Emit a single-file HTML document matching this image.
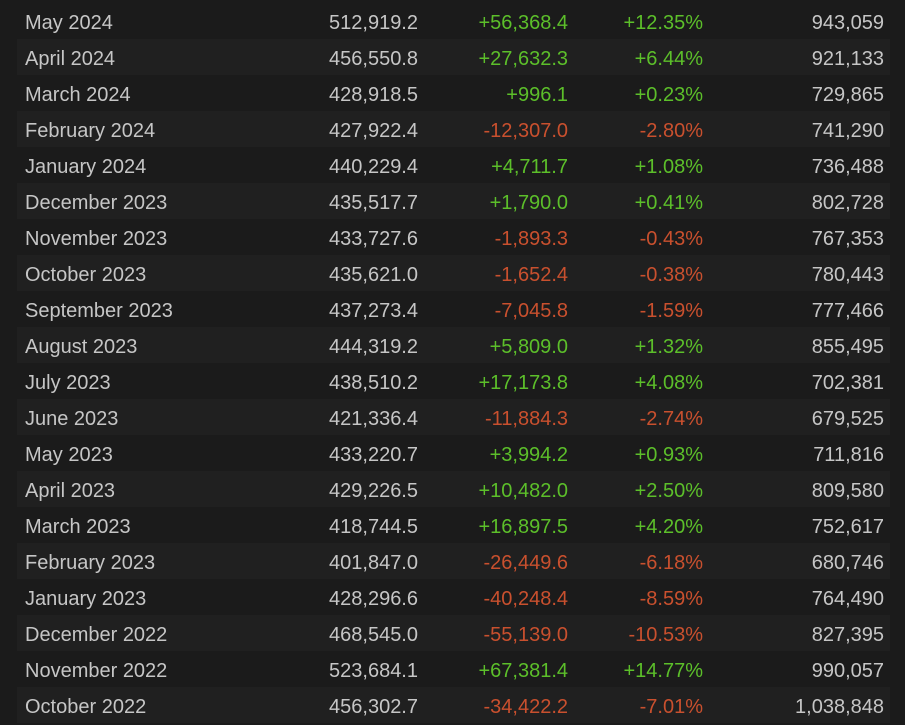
<!DOCTYPE html>
<html><head><meta charset="utf-8"><style>
html,body{margin:0;padding:0;background:#1b1b1b;width:905px;height:720px;overflow:hidden}
body{font-family:"Liberation Sans",Arial,sans-serif;font-size:20px;color:#c6c6c6}
.r{position:absolute;left:17px;width:873px;height:36px;line-height:36px}
.r.o{background:#202020}
.r span{position:absolute;top:2px;white-space:nowrap}
.a{left:8px}
.b{right:472px}
.c{right:322px}
.d{right:187px}
.e{right:6px}
.g{color:#5cbf2a}.n{color:#c9502e}
</style></head><body>
<div class="r" style="top:3px"><span class="a">May 2024</span><span class="b">512,919.2</span><span class="c g">+56,368.4</span><span class="d g">+12.35%</span><span class="e">943,059</span></div>
<div class="r o" style="top:39px"><span class="a">April 2024</span><span class="b">456,550.8</span><span class="c g">+27,632.3</span><span class="d g">+6.44%</span><span class="e">921,133</span></div>
<div class="r" style="top:75px"><span class="a">March 2024</span><span class="b">428,918.5</span><span class="c g">+996.1</span><span class="d g">+0.23%</span><span class="e">729,865</span></div>
<div class="r o" style="top:111px"><span class="a">February 2024</span><span class="b">427,922.4</span><span class="c n">-12,307.0</span><span class="d n">-2.80%</span><span class="e">741,290</span></div>
<div class="r" style="top:147px"><span class="a">January 2024</span><span class="b">440,229.4</span><span class="c g">+4,711.7</span><span class="d g">+1.08%</span><span class="e">736,488</span></div>
<div class="r o" style="top:183px"><span class="a">December 2023</span><span class="b">435,517.7</span><span class="c g">+1,790.0</span><span class="d g">+0.41%</span><span class="e">802,728</span></div>
<div class="r" style="top:219px"><span class="a">November 2023</span><span class="b">433,727.6</span><span class="c n">-1,893.3</span><span class="d n">-0.43%</span><span class="e">767,353</span></div>
<div class="r o" style="top:255px"><span class="a">October 2023</span><span class="b">435,621.0</span><span class="c n">-1,652.4</span><span class="d n">-0.38%</span><span class="e">780,443</span></div>
<div class="r" style="top:291px"><span class="a">September 2023</span><span class="b">437,273.4</span><span class="c n">-7,045.8</span><span class="d n">-1.59%</span><span class="e">777,466</span></div>
<div class="r o" style="top:327px"><span class="a">August 2023</span><span class="b">444,319.2</span><span class="c g">+5,809.0</span><span class="d g">+1.32%</span><span class="e">855,495</span></div>
<div class="r" style="top:363px"><span class="a">July 2023</span><span class="b">438,510.2</span><span class="c g">+17,173.8</span><span class="d g">+4.08%</span><span class="e">702,381</span></div>
<div class="r o" style="top:399px"><span class="a">June 2023</span><span class="b">421,336.4</span><span class="c n">-11,884.3</span><span class="d n">-2.74%</span><span class="e">679,525</span></div>
<div class="r" style="top:435px"><span class="a">May 2023</span><span class="b">433,220.7</span><span class="c g">+3,994.2</span><span class="d g">+0.93%</span><span class="e">711,816</span></div>
<div class="r o" style="top:471px"><span class="a">April 2023</span><span class="b">429,226.5</span><span class="c g">+10,482.0</span><span class="d g">+2.50%</span><span class="e">809,580</span></div>
<div class="r" style="top:507px"><span class="a">March 2023</span><span class="b">418,744.5</span><span class="c g">+16,897.5</span><span class="d g">+4.20%</span><span class="e">752,617</span></div>
<div class="r o" style="top:543px"><span class="a">February 2023</span><span class="b">401,847.0</span><span class="c n">-26,449.6</span><span class="d n">-6.18%</span><span class="e">680,746</span></div>
<div class="r" style="top:579px"><span class="a">January 2023</span><span class="b">428,296.6</span><span class="c n">-40,248.4</span><span class="d n">-8.59%</span><span class="e">764,490</span></div>
<div class="r o" style="top:615px"><span class="a">December 2022</span><span class="b">468,545.0</span><span class="c n">-55,139.0</span><span class="d n">-10.53%</span><span class="e">827,395</span></div>
<div class="r" style="top:651px"><span class="a">November 2022</span><span class="b">523,684.1</span><span class="c g">+67,381.4</span><span class="d g">+14.77%</span><span class="e">990,057</span></div>
<div class="r o" style="top:687px"><span class="a">October 2022</span><span class="b">456,302.7</span><span class="c n">-34,422.2</span><span class="d n">-7.01%</span><span class="e">1,038,848</span></div>
</body></html>
